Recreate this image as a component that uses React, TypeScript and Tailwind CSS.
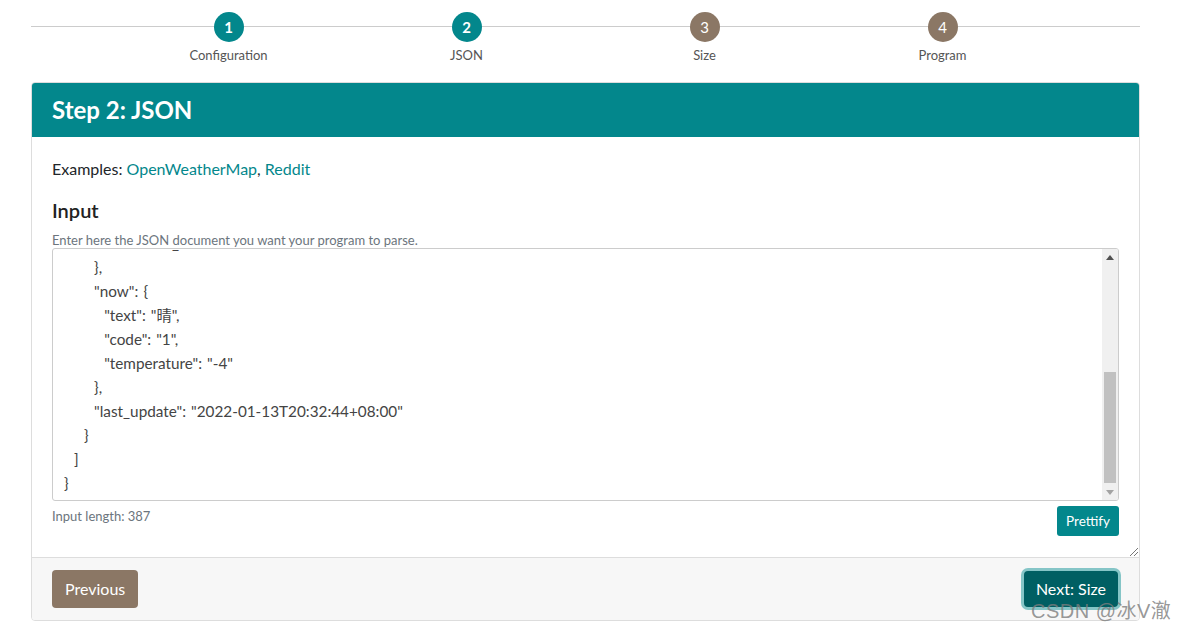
import React from "react";

const steps = [
  { n: 1, label: "Configuration", done: true },
  { n: 2, label: "JSON", done: true },
  { n: 3, label: "Size", done: false },
  { n: 4, label: "Program", done: false },
];

const jsonLines = [
  '        "timezone_offset": "+08:00"',
  "      },",
  '      "now": {',
  '        "text": "晴",',
  '        "code": "1",',
  '        "temperature": "-4"',
  "      },",
  '      "last_update": "2022-01-13T20:32:44+08:00"',
  "    }",
  "  ]",
  "}",
];

function Stepper() {
  return (
    <div className="relative mx-[31px] h-[82px] w-[1109px]">
      <div className="absolute left-0 right-0 top-[26px] h-px bg-[#cccccc]" />
      <div className="relative flex justify-center pt-[12px]">
        {steps.map((s) => (
          <div key={s.n} className="flex w-[238px] flex-col items-center">
            <div
              className={`flex h-[30px] w-[30px] items-center justify-center rounded-full text-[15px] text-white ${
                s.done ? "bg-[#03878c] font-bold" : "bg-[#8b7765]"
              }`}
            >
              {s.n}
            </div>
            <div className="mt-[4px] text-[13px] leading-[18px] text-[#555555]">{s.label}</div>
          </div>
        ))}
      </div>
    </div>
  );
}

function JsonBox() {
  return (
    <div className="relative flex h-[253px] overflow-hidden rounded-[3px] border border-[#cccccc] bg-white">
      <div className="flex-1 overflow-hidden pl-[11px]">
        <div className="-mt-[18px] whitespace-pre text-[15.3px] leading-[24px] text-[#444444] [word-spacing:1.1px]">
          {jsonLines.map((l, i) => (
            <div key={i}>{l}</div>
          ))}
        </div>
      </div>
      <div className="flex w-[16px] flex-col items-center bg-[#f0f0f0]">
        <div className="flex h-[16px] items-center justify-center">
          <svg width="8" height="5" viewBox="0 0 8 5">
            <path d="M0 5 L4 0 L8 5 Z" fill="#505050" />
          </svg>
        </div>
        <div className="flex-1 w-full px-[2px] pt-[107px] pb-[1px]">
          <div className="h-full w-full bg-[#c1c1c1]" />
        </div>
        <div className="flex h-[16px] items-center justify-center">
          <svg width="8" height="5" viewBox="0 0 8 5">
            <path d="M0 0 L8 0 L4 5 Z" fill="#a3a3a3" />
          </svg>
        </div>
      </div>
    </div>
  );
}

export default function App() {
  return (
    <div
      className="relative h-[630px] w-[1189px] overflow-hidden bg-white text-[#212529]"
      style={{ fontFamily: "Lato, 'Noto Sans CJK SC', sans-serif" }}
    >
      <Stepper />
      <div className="mx-[31px] w-[1109px] overflow-hidden rounded-[4px] border border-[#dddddd]">
        <div className="flex h-[54px] items-center bg-[#03878c] px-5">
          <h1 className="text-[24px] font-bold text-white">Step 2: JSON</h1>
        </div>
        <div className="relative px-5 pt-[21px] pb-[21px]">
          <p className="text-[16px] leading-[22px]">
            Examples: <span className="text-[#03878c]">OpenWeatherMap</span>,{" "}
            <span className="text-[#03878c]">Reddit</span>
          </p>
          <h2 className="mt-[18px] text-[20px] font-semibold leading-[24px] text-[#222222]">Input</h2>
          <p className="mt-[10px] text-[13px] leading-[16px] text-[#6c757d]">
            Enter here the JSON document you want your program to parse.
          </p>
          <JsonBox />
          <div className="mt-[5px] flex items-start justify-between">
            <span className="mt-[2px] text-[13px] leading-[16px] text-[#6c757d]">Input length: 387</span>
            <button className="h-[30px] rounded-[3px] bg-[#03878c] px-[9px] text-[13.5px] text-white">
              Prettify
            </button>
          </div>
          <svg className="absolute bottom-[1px] right-[1px]" width="9" height="9" viewBox="0 0 9 9">
            <path d="M9 1 L1 9 M9 5 L5 9" stroke="#777" strokeWidth="1" />
          </svg>
        </div>
        <div className="flex items-center justify-between border-t border-[#dddddd] bg-[#f7f7f7] px-5 pt-[12px] pb-[12px]">
          <button className="h-[38px] rounded-[4px] bg-[#8b7765] px-[13px] text-[16px] text-white">
            Previous
          </button>
          <button className="mr-[1px] h-[36px] rounded-[4px] bg-[#005f63] px-[12px] text-[16px] text-white shadow-[0_0_0_3px_#85c5c7]">
            Next: Size
          </button>
        </div>
      </div>
      <div
        className="pointer-events-none absolute left-[1031px] top-[596px] text-[20px] tracking-[0.5px] text-[#7d7d7d]/80"
        style={{ fontFamily: "'Liberation Sans', 'Noto Sans CJK SC', sans-serif" }}
      >
        CSDN @冰V澈
      </div>
    </div>
  );
}
